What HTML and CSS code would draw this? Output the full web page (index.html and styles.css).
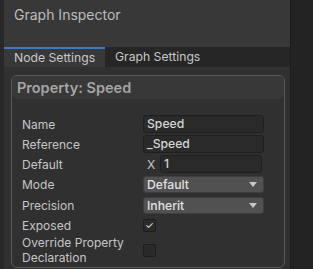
FILE: index.html
```html
<!DOCTYPE html>
<html lang="en">
<head>
  <meta charset="UTF-8">
  <title>Graph Inspector</title>
  <link rel="stylesheet" href="styles.css">
</head>
<body>
  <div class="window">
    <div class="inspector">
      <div class="inspector-header">Graph Inspector</div>
      <div class="tabs">
        <div class="tab active">Node Settings</div>
        <div class="tab">Graph Settings</div>
      </div>
      <div class="content">
        <div class="card">
          <div class="card-title">Property: Speed</div>
          <div class="fields">
            <div class="row">
              <span class="label">Name</span>
              <div class="text-field">Speed</div>
            </div>
            <div class="row">
              <span class="label">Reference</span>
              <div class="text-field">_Speed</div>
            </div>
            <div class="row">
              <span class="label">Default</span>
              <div class="vector">
                <span class="axis">X</span>
                <div class="text-field">1</div>
              </div>
            </div>
            <div class="row spaced">
              <span class="label">Mode</span>
              <div class="dropdown">Default<span class="arrow"></span></div>
            </div>
            <div class="row spaced">
              <span class="label">Precision</span>
              <div class="dropdown">Inherit<span class="arrow"></span></div>
            </div>
            <div class="row short">
              <span class="label">Exposed</span>
              <div class="checkbox checked">&#10003;</div>
            </div>
            <div class="row tall">
              <span class="label">Override Property Declaration</span>
              <div class="checkbox"></div>
            </div>
          </div>
        </div>
      </div>
    </div>
    <div class="side"></div>
  </div>
</body>
</html>
```
FILE: styles.css
```css
body {
  margin: 0;
  background-color: #282828;
  font-family: Inter, "Noto Sans", sans-serif;
  height: 269px;
  overflow: hidden;
}

.window {
  display: flex;
  height: 100%;
  padding-left: 4px;
}

.inspector {
  width: 286px;
  display: flex;
  flex-direction: column;
  background-color: #303030;
}

.side {
  flex: 1;
  background-color: #232323;
  border-left: 1px solid #1c1c1c;
}

.inspector-header {
  flex-shrink: 0;
  height: 47px;
  box-sizing: border-box;
  background-color: #383838;
  color: #bcbcbc;
  font-size: 14px;
  padding: 6px 0 0 10px;
}

.tabs {
  flex-shrink: 0;
  display: flex;
  height: 20px;
  background-color: #262626;
}

.tab {
  color: #c8c8c8;
  font-size: 12.2px;
  line-height: 20px;
  padding: 0 10px;
  white-space: nowrap;
  box-sizing: border-box;
}

.tab.active {
  width: 101px;
  background-color: #383838;
  border-top: 2px solid #3b7bc0;
  line-height: 18px;
}

.content {
  flex: 1;
  padding: 8px 5px 0 7px;
  overflow: hidden;
}

.card {
  border: 1px solid #5a5a5a;
  border-radius: 6px;
  height: 193px;
  box-sizing: border-box;
}

.card-title {
  height: 23px;
  background-color: #383838;
  border-radius: 5px 5px 6px 6px;
  color: #a6a6a6;
  font-size: 14.5px;
  font-weight: 600;
  line-height: 23px;
  padding-left: 5px;
}

.fields {
  padding: 16px 20px 0 10px;
}

.row {
  display: flex;
  align-items: center;
  height: 18px;
  margin-bottom: 2px;
}

.row.spaced {
  margin-top: 2px;
  margin-bottom: 3px;
}

.row.short {
  height: 16px;
  margin-bottom: 2px;
}

.row.tall {
  height: 30px;
}

.label {
  width: 121px;
  flex-shrink: 0;
  color: #c6c6c6;
  font-size: 12px;
  line-height: 15px;
}

.text-field {
  flex: 1;
  height: 18px;
  box-sizing: border-box;
  background-color: #2a2a2a;
  border: 1px solid #1f1f1f;
  border-radius: 3px;
  color: #d4d4d4;
  font-size: 12.2px;
  font-weight: 500;
  line-height: 16px;
  padding-left: 3px;
}

.vector {
  flex: 1;
  display: flex;
  align-items: center;
  padding-right: 2px;
}

.axis {
  color: #c6c6c6;
  font-size: 12.2px;
  width: 17px;
  padding-left: 4px;
  box-sizing: border-box;
}

.dropdown {
  flex: 1;
  height: 17px;
  box-sizing: border-box;
  background-color: #515151;
  border: 1px solid #3e3e3e;
  border-radius: 3px;
  color: #e2e2e2;
  font-size: 12.2px;
  font-weight: 500;
  line-height: 15px;
  padding-left: 3px;
  display: flex;
  justify-content: space-between;
  align-items: center;
}

.arrow {
  width: 0;
  height: 0;
  border-left: 4px solid transparent;
  border-right: 4px solid transparent;
  border-top: 5px solid #c8c8c8;
  margin-right: 6px;
}

.checkbox {
  width: 13px;
  height: 13px;
  box-sizing: border-box;
  background-color: #2a2a2a;
  border: 1px solid #1d1d1d;
  border-radius: 2px;
  color: #e8e8e8;
  font-size: 10px;
  line-height: 11px;
  text-align: center;
}
```
